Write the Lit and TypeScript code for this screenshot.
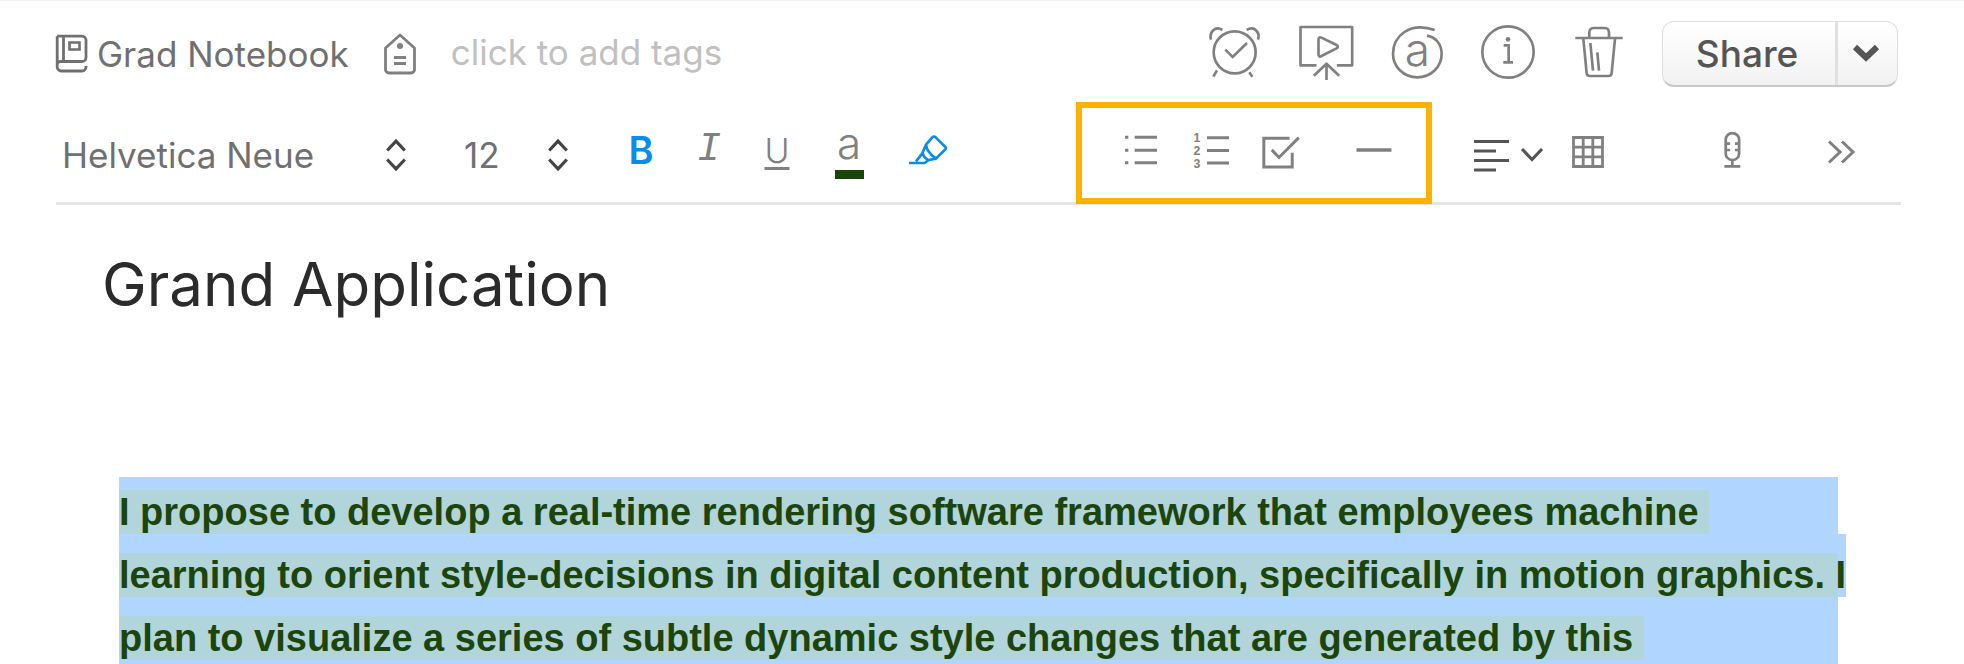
import { LitElement, html, css, svg } from "lit";
import { customElement, property } from "lit/decorators.js";

const icons: Record<string, { box: string; w: number; h: number; body: unknown }> = {
  notebook: {
    box: "0 0 32 40", w: 32, h: 40,
    body: svg`<path d="M1.2 2.2V33a4 4 0 0 0 4 4H26a4 4 0 0 0 4-4V32M1.2 2.2H26a4 4 0 0 1 4 4V23.5a4 4 0 0 1-4 4H4.500a3 3 0 0 0-3 2.500M7.500 2.200V27.500"/><path d="M13.500 8.500H23.500V15.500H13.500Z" stroke-width="2.600"/>`,
  },
  tag: {
    box: "0 0 34 44", w: 34, h: 44,
    body: svg`<path d="M17 3L31.500 16V37.500a3.500 3.500 0 0 1-3.500 3.500H6a3.500 3.500 0 0 1-3.500-3.500V16Z" stroke-linejoin="round"/><circle cx="17" cy="14" r="3" fill="currentColor" stroke="none"/><path d="M11 25.500H23M11 31.500H23" stroke-width="2.800"/>`,
  },
  alarm: {
    box: "84 72 160 168", w: 54, h: 56,
    body: svg`<g stroke-width="8"><circle cx="163" cy="157" r="63"/><path d="M135 149L157 171L200 129M92 119C86 98 103 76 126 90M233 119C240 98 223 76 199 90M110 211L99 230M207 217L216 230"/></g>`,
  },
  present: {
    box: "348 72 170 174", w: 57, h: 58,
    body: svg`<g stroke-width="8" stroke-linejoin="round"><path d="M403 199H355V84H510V199H464M395 230L433 194L471 230M433 194V243"/><path d="M409 122Q409 112 418 116L463 138Q471 143 463 148L418 171Q409 176 409 166Z"/></g>`,
  },
  account: {
    box: "632 70 160 168", w: 54, h: 56,
    body: svg`<path d="M765 88C690 62 640 106 640 160A73 70 0 0 0 786 160C786 132 770 110 742 105" stroke-width="8"/><text x="713" y="195" text-anchor="middle" font-size="138" font-family="Inter, sans-serif" font-weight="300" fill="currentColor" stroke="none">a</text>`,
  },
  info: {
    box: "898 68 168 168", w: 56, h: 56,
    body: svg`<g stroke-width="8"><circle cx="982" cy="152" r="77"/><path d="M969 132H984V183M968 183H997"/><circle cx="982" cy="114" r="7" fill="currentColor" stroke="none"/></g>`,
  },
  trash: {
    box: "1183 72 148 168", w: 50, h: 56,
    body: svg`<g stroke-width="8"><path d="M1186 114H1328M1228 112V98Q1228 84 1242 84H1273Q1287 84 1287 98V112M1210 116L1220 220Q1221 228 1231 228H1284Q1294 228 1295 220L1305 116M1231 129L1239 212M1252 157L1257 212"/></g>`,
  },
  caret: { box: "0 0 28 20", w: 28, h: 20, body: svg`<path d="M3 4L14 14.500L25 4" stroke-width="6"/>` },
  updown: { box: "0 0 20 34", w: 20, h: 34, body: svg`<path d="M1.200 12.500L10 3.200L18.800 12.500M1.200 21.500L10 30.800L18.800 21.500" stroke-width="3.200"/>` },
  marker: {
    box: "384 132 120 96", w: 40, h: 32,
    body: svg`<g stroke-width="8" stroke-linejoin="round"><path d="M387 219H434L446 210L468 206L497 177Q499 174 496 171L467 142Q462 138 457 142L438 164L427 190L408 214M438 164Q440 186 468 206M427 188Q431 203 446 211"/></g>`,
  },
  bullets: { box: "192 132 102 96", w: 34, h: 32, body: svg`<path d="M224 142H291M224 180.500H291M224 218H291M195 142H205M195 180.500H205M195 218H205" stroke-width="9"/>` },
  numbers: {
    box: "396 126 111 110", w: 37, h: 37,
    body: svg`<path d="M438 142.500H504M438 181H504M438 218.500H504" stroke-width="9"/><g fill="currentColor" stroke="none" font-family="Liberation Sans, sans-serif" font-weight="700" font-size="37" text-anchor="middle"><text x="408" y="156">1</text><text x="408" y="195">2</text><text x="408" y="233">3</text></g>`,
  },
  check: { box: "604 132 120 106", w: 40, h: 35, body: svg`<path d="M690 142H612V229H698V186M636 177L658 200L718 140" stroke-width="9"/>` },
  rule: { box: "0 0 36 32", w: 36, h: 32, body: svg`<path d="M.5 16H35.500" stroke-width="3.400"/>` },
  align: { box: "0 0 35 34", w: 35, h: 34, body: svg`<path d="M0 3.500H35M0 13H22M0 22.500H35M0 32H22" stroke-width="3.200"/>` },
  down: { box: "0 0 24 18", w: 24, h: 18, body: svg`<path d="M2 3L12 13.500L22 3" stroke-width="3.200"/>` },
  table: { box: "0 0 32 32", w: 32, h: 32, body: svg`<path d="M1.500 1.500H30.500V30.500H1.500ZM11.200 1V31M20.800 1V31M1 11.200H31M1 20.800H31" stroke-width="2.800"/>` },
  mic: {
    box: "848 124 56 112", w: 19, h: 38,
    body: svg`<g stroke-width="8"><path d="M856 150a19.500 19.500 0 0 1 39.500 0V190a19.500 19.500 0 0 1-39.500 0ZM875.500 210V226M852 228H899M858 161H869M858 180H869M883 161H894M883 180H894"/></g>`,
  },
  more: { box: "0 0 28 26", w: 28, h: 26, body: svg`<path d="M2 2.500L13 13L2 23.500M15 2.500L26 13L15 23.500" stroke-width="3"/>` },
};

@customElement("note-icon")
export class NoteIcon extends LitElement {
  static styles = css`
    :host { display: inline-flex; flex: none; }
    .glyph { display: block; overflow: visible; fill: none; stroke: currentColor; stroke-width: 2.8; }
  `;
  @property() name = "";

  render() {
    const i = icons[this.name];
    return html`<svg class="glyph" aria-hidden="true" width=${i.w} height=${i.h} viewBox=${i.box}>${i.body}</svg>`;
  }
}

@customElement("app-root")
export class AppRoot extends LitElement {
  static styles = css`
    :host {
      display: flex;
      flex-direction: column;
      box-sizing: border-box;
      min-height: 100vh;
      border-top: 1px solid #f0f0f0;
      background: #fff;
      color: #808080;
      font-family: Inter, "Liberation Sans", sans-serif;
    }
    button, select, input {
      appearance: none;
      box-sizing: border-box;
      margin: 0;
      padding: 0;
      border: 0;
      background: none;
      color: inherit;
      font: inherit;
    }
    button, select { cursor: pointer; }
    .header {
      display: flex;
      align-items: center;
      box-sizing: border-box;
      height: 101px;
      margin: 0 66px 0 56px;
      padding-top: 4px;
      font-size: 35px;
    }
    .notebook { display: flex; align-items: center; gap: 9px; color: #707070; white-space: nowrap; }
    .tags { display: flex; flex: 1; align-items: center; gap: 34px; margin-left: 34px; min-width: 0; }
    .tag-input { flex: 1; min-width: 0; padding-bottom: 4px; }
    .tag-input::placeholder { color: #c0c0c0; opacity: 1; }
    .actions { display: flex; gap: 35px; padding-bottom: 3px; }
    .action { display: flex; align-items: center; justify-content: center; width: 56px; height: 60px; }
    .share {
      display: flex;
      box-sizing: border-box;
      height: 66px;
      margin-left: 35px;
      border: 1px solid #dedede;
      border-bottom: 2px solid #c8c8c8;
      border-radius: 12px;
      background: linear-gradient(#fff, #f2f2f2);
      color: #555;
    }
    .share-main { width: 172px; padding-right: 4px; font-size: 37px; font-weight: 500; }
    .share-more { display: flex; align-items: center; justify-content: center; width: 62px; padding-right: 4px; border-left: 3px solid #e0e0e0; }
    .toolbar {
      display: flex;
      align-items: center;
      box-sizing: border-box;
      height: 103px;
      margin: 0 63px 0 56px;
      padding: 0 25px 4px 6px;
      border-bottom: 3px solid #e5e5e5;
    }
    .picker { display: grid; align-items: center; padding-top: 10px; color: #707070; font-size: 35px; }
    .picker select { grid-area: 1 / 1; height: 48px; }
    .picker note-icon { grid-area: 1 / 1; justify-self: end; color: #444; pointer-events: none; }
    .family { width: 344px; }
    .size { width: 104px; margin: 0 39px 0 58px; }
    .tool { display: flex; flex: none; align-items: center; justify-content: center; width: 70px; height: 60px; }
    .format { display: flex; }
    .format .tool { width: 68px; }
    .format .wide { width: 76px; }
    .on { color: #0a8ce9; }
    .bold { font-size: 38px; font-weight: 600; }
    .italic { font: italic 40px/48px "Liberation Mono", monospace; }
    .underline { font-size: 34px; font-weight: 300; text-decoration: underline 3px; text-underline-offset: 4px; }
    .format .color { flex-direction: column; gap: 5px; font-size: 44px; font-weight: 300; line-height: 44px; }
    .swatch { width: 29px; height: 9px; background: #1a450a; }
    .marker { margin-left: 7px; }
    .callout {
      display: flex;
      flex: none;
      align-items: center;
      align-self: flex-start;
      box-sizing: border-box;
      height: 102px;
      margin: 0 42px 0 auto;
      padding: 0 17px 6px 24px;
      border: 6px solid #ffb000;
    }
    .rule { margin-left: 23px; }
    .low { padding-top: 4px; }
    .align { justify-content: space-between; padding-top: 10px; color: #555; }
    .grid { margin-left: 9px; }
    .mic { margin-left: 74px; }
    .more { margin-left: 39px; }
    .title { margin: 0 102px; padding-top: 39px; color: #2b2b2b; font-size: 60px; font-weight: 400; line-height: 80px; }
    .body {
      display: flex;
      flex: 1;
      flex-direction: column;
      gap: 19px;
      margin: 153px 126px 0 119px;
      padding: 13px 0 4px;
      background: #b0d6ff;
      color: #1c450c;
      font: 700 38px/44px "Liberation Sans", Arial, sans-serif;
      white-space: pre;
    }
    .line { position: relative; }
    .run { position: relative; z-index: 1; display: block; width: fit-content; max-width: 100%; background: #b2d4db; }
    .overhang::after {
      content: "";
      position: absolute;
      top: -19px;
      right: -8px;
      bottom: 0;
      width: 8px;
      background: #b0d6ff;
    }
  `;

  render() {
    const lines = [
      "I propose to develop a real-time rendering software framework that employees machine ",
      "learning to orient style-decisions in digital content production, specifically in motion graphics. I",
      "plan to visualize a series of subtle dynamic style changes that are generated by this ",
    ];
    const actions = [
      ["alarm", "Reminder"],
      ["present", "Present"],
      ["account", "Annotate"],
      ["info", "Note info"],
      ["trash", "Delete note"],
    ];
    return html`
      <header class="header">
        <button class="notebook"><note-icon name="notebook"></note-icon>Grad Notebook</button>
        <label class="tags">
          <note-icon name="tag"></note-icon>
          <input class="tag-input" aria-label="Tags" placeholder="click to add tags" />
        </label>
        <div class="actions">
          ${actions.map(([n, l]) => html`<button class="action" aria-label=${l}><note-icon name=${n}></note-icon></button>`)}
        </div>
        <div class="share">
          <button class="share-main">Share</button>
          <button class="share-more" aria-label="Share options"><note-icon name="caret"></note-icon></button>
        </div>
      </header>
      <div class="toolbar" role="toolbar" aria-label="Formatting">
        <label class="picker family">
          <select aria-label="Font"><option>Helvetica Neue</option></select>
          <note-icon name="updown"></note-icon>
        </label>
        <label class="picker size">
          <select aria-label="Font size"><option>12</option></select>
          <note-icon name="updown"></note-icon>
        </label>
        <div class="format">
          <button class="tool bold on" aria-label="Bold">B</button>
          <button class="tool italic" aria-label="Italic">I</button>
          <button class="tool underline" aria-label="Underline">U</button>
          <button class="tool wide color" aria-label="Text color">a<span class="swatch"></span></button>
          <button class="tool marker on" aria-label="Highlight"><note-icon name="marker"></note-icon></button>
        </div>
        <div class="callout">
          <button class="tool" aria-label="Bulleted list"><note-icon name="bullets"></note-icon></button>
          <button class="tool" aria-label="Numbered list"><note-icon name="numbers"></note-icon></button>
          <button class="tool low" aria-label="Checkbox"><note-icon name="check"></note-icon></button>
          <button class="tool rule" aria-label="Horizontal rule"><note-icon name="rule"></note-icon></button>
        </div>
        <button class="tool align" aria-label="Alignment"><note-icon name="align"></note-icon><note-icon name="down"></note-icon></button>
        <button class="tool grid low" aria-label="Table"><note-icon name="table"></note-icon></button>
        <button class="tool mic" aria-label="Record audio"><note-icon name="mic"></note-icon></button>
        <button class="tool more low" aria-label="More"><note-icon name="more"></note-icon></button>
      </div>
      <h1 class="title">Grand Application</h1>
      <div class="body">
        ${lines.map((t, i) => html`<div class="line ${i === 1 ? "overhang" : ""}"><span class="run">${t}</span></div>`)}
      </div>
    `;
  }
}
